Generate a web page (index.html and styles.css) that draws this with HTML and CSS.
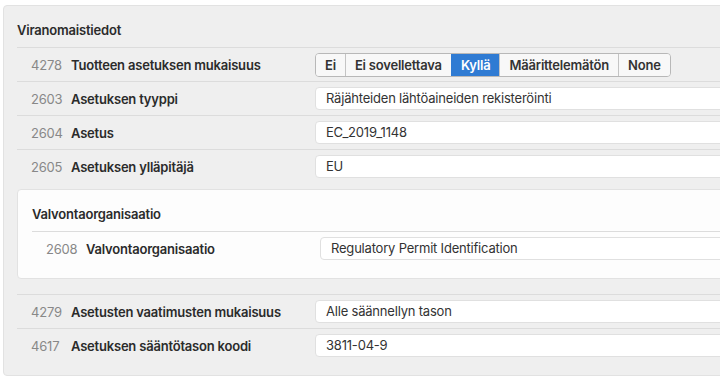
FILE: index.html
```html
<!DOCTYPE html>
<html lang="fi">
<head>
<meta charset="UTF-8">
<meta name="viewport" content="width=device-width, initial-scale=1.0">
<title>Viranomaistiedot</title>
<link rel="stylesheet" href="styles.css">
</head>
<body>
  <div class="panel">
    <div class="panel-title">Viranomaistiedot</div>

    <div class="row">
      <span class="num">4278</span>
      <span class="label">Tuotteen asetuksen mukaisuus</span>
      <div class="btn-group">
        <button class="btn">Ei</button>
        <button class="btn">Ei sovellettava</button>
        <button class="btn active">Kyllä</button>
        <button class="btn">Määrittelemätön</button>
        <button class="btn">None</button>
      </div>
    </div>

    <div class="row">
      <span class="num">2603</span>
      <span class="label">Asetuksen tyyppi</span>
      <div class="field">Räjähteiden lähtöaineiden rekisteröinti</div>
    </div>

    <div class="row">
      <span class="num">2604</span>
      <span class="label">Asetus</span>
      <div class="field">EC_2019_1148</div>
    </div>

    <div class="row">
      <span class="num">2605</span>
      <span class="label">Asetuksen ylläpitäjä</span>
      <div class="field">EU</div>
    </div>

    <div class="subpanel">
      <div class="panel-title">Valvontaorganisaatio</div>
      <div class="row sub-row">
        <span class="num">2608</span>
        <span class="label">Valvontaorganisaatio</span>
        <div class="field">Regulatory Permit Identification</div>
      </div>
    </div>

    <div class="row after-sub">
      <span class="num">4279</span>
      <span class="label">Asetusten vaatimusten mukaisuus</span>
      <div class="field">Alle säännellyn tason</div>
    </div>

    <div class="row">
      <span class="num">4617</span>
      <span class="label">Asetuksen sääntötason koodi</span>
      <div class="field">3811-04-9</div>
    </div>
  </div>
</body>
</html>
```

FILE: styles.css
```css
body {
  margin: 0;
  padding: 5px 0 0 3px;
  background-color: #fff;
  color: #333;
  font-family: Inter, "Noto Sans", sans-serif;
  font-size: 13px;
  letter-spacing: -0.2px;
  overflow: hidden;
}

.panel {
  width: 800px;
  box-sizing: border-box;
  background-color: #efefef;
  border: 1px solid #e2e2e2;
  border-radius: 4px;
  padding: 14px 0 13px 13px;
}

.panel-title {
  font-weight: 600;
  line-height: 20px;
  padding-bottom: 7px;
  color: #2b2b2b;
}

.row {
  display: flex;
  align-items: center;
  height: 34px;
  box-sizing: border-box;
  border-top: 1px solid #dcdcdc;
  padding-left: 14px;
}

.num {
  width: 40px;
  color: #888;
  flex-shrink: 0;
}

.label {
  width: 244px;
  font-weight: 600;
  color: #2b2b2b;
  flex-shrink: 0;
}

.field {
  flex: 1;
  height: 23px;
  line-height: 21px;
  box-sizing: border-box;
  padding-left: 10px;
  background-color: #fff;
  border: 1px solid #e0e0e0;
  border-radius: 4px;
  color: #333;
}

.btn-group {
  display: flex;
  height: 24px;
  box-sizing: border-box;
  border: 1px solid #b8b8b8;
  border-radius: 4px;
  overflow: hidden;
}

.btn {
  font-family: inherit;
  font-size: 13px;
  font-weight: 600;
  letter-spacing: -0.2px;
  color: #333;
  background-color: #f8f8f8;
  border: none;
  border-left: 1px solid #c4c4c4;
  padding: 0 9px;
  margin: 0;
}

.btn:first-child {
  border-left: none;
}

.btn.active {
  background-color: #2f7bd3;
  color: #fff;
  border-left-color: #2f7bd3;
}

.subpanel {
  margin-top: 6px;
  background-color: #fdfdfd;
  border: 1px solid #e2e2e2;
  border-radius: 4px;
  padding: 14px 0 13px 14px;
}

.sub-row {
  padding-left: 14px;
}

.sub-row .label {
  width: 234px;
}

.after-sub {
  margin-top: 15px;
}
```
